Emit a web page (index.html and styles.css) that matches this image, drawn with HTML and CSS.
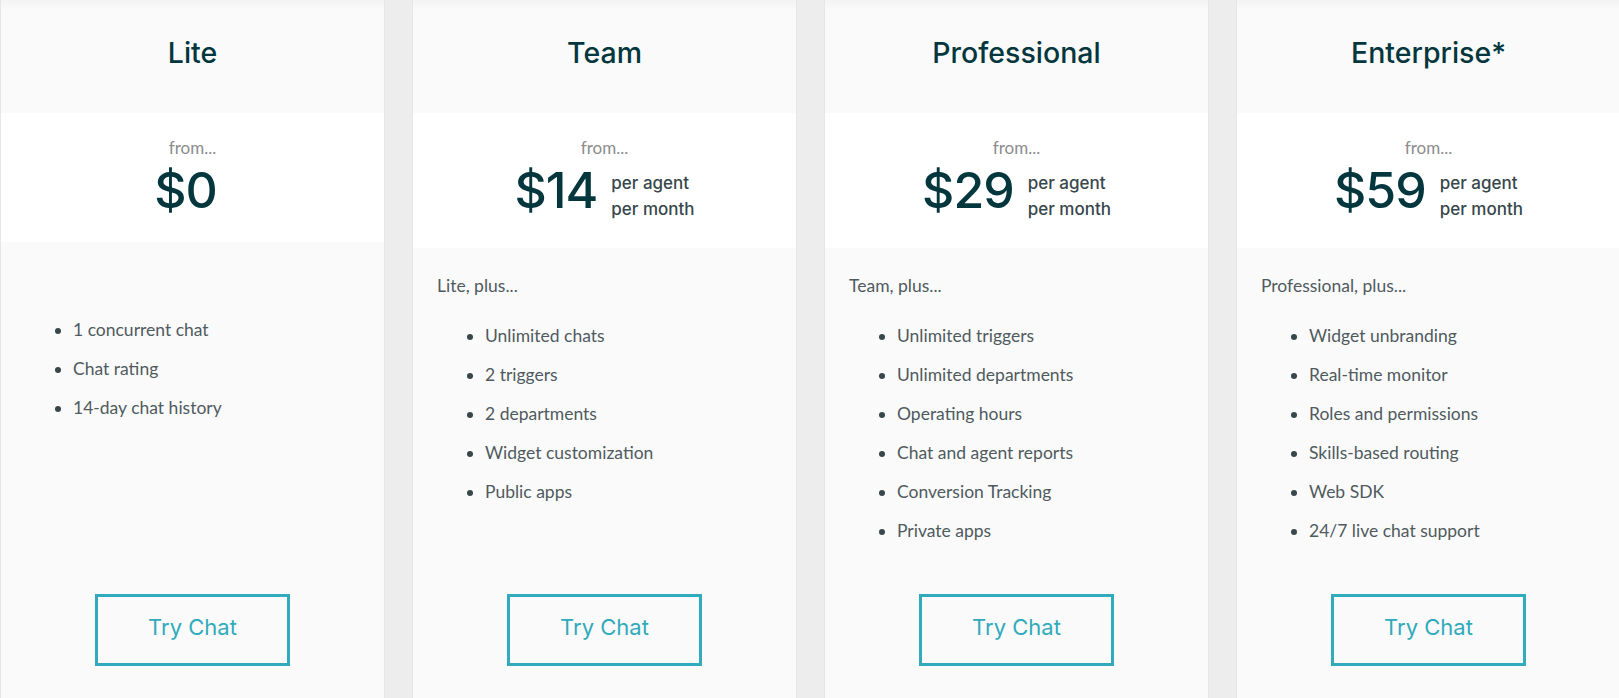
FILE: index.html
```html
<!DOCTYPE html>
<html>

<head>
    <link rel="stylesheet" href="styles.css">
    <title>Chat Pricing</title>
</head>

<body>
    <div class="plans">
        <div class="plan">
            <div class="plan-head">
                <h2>Lite</h2>
            </div>
            <div class="plan-price">
                <p class="from">from...</p>
                <div class="amount">
                    <span class="num">$0</span>
                    <span class="per"></span>
                </div>
            </div>
            <div class="plan-body">
                <p class="plus">&nbsp;</p>
                <ul>
                    <li>1 concurrent chat</li>
                    <li>Chat rating</li>
                    <li>14-day chat history</li>
                </ul>
            </div>
            <div class="plan-foot">
                <a class="try" href="#">Try Chat</a>
            </div>
        </div>

        <div class="plan">
            <div class="plan-head">
                <h2>Team</h2>
            </div>
            <div class="plan-price">
                <p class="from">from...</p>
                <div class="amount">
                    <span class="num">$14</span>
                    <span class="per">per agent<br>per month</span>
                </div>
            </div>
            <div class="plan-body">
                <p class="plus">Lite, plus...</p>
                <ul>
                    <li>Unlimited chats</li>
                    <li>2 triggers</li>
                    <li>2 departments</li>
                    <li>Widget customization</li>
                    <li>Public apps</li>
                </ul>
            </div>
            <div class="plan-foot">
                <a class="try" href="#">Try Chat</a>
            </div>
        </div>

        <div class="plan">
            <div class="plan-head">
                <h2>Professional</h2>
            </div>
            <div class="plan-price">
                <p class="from">from...</p>
                <div class="amount">
                    <span class="num">$29</span>
                    <span class="per">per agent<br>per month</span>
                </div>
            </div>
            <div class="plan-body">
                <p class="plus">Team, plus...</p>
                <ul>
                    <li>Unlimited triggers</li>
                    <li>Unlimited departments</li>
                    <li>Operating hours</li>
                    <li>Chat and agent reports</li>
                    <li>Conversion Tracking</li>
                    <li>Private apps</li>
                </ul>
            </div>
            <div class="plan-foot">
                <a class="try" href="#">Try Chat</a>
            </div>
        </div>

        <div class="plan">
            <div class="plan-head">
                <h2>Enterprise*</h2>
            </div>
            <div class="plan-price">
                <p class="from">from...</p>
                <div class="amount">
                    <span class="num">$59</span>
                    <span class="per">per agent<br>per month</span>
                </div>
            </div>
            <div class="plan-body">
                <p class="plus">Professional, plus...</p>
                <ul>
                    <li>Widget unbranding</li>
                    <li>Real-time monitor</li>
                    <li>Roles and permissions</li>
                    <li>Skills-based routing</li>
                    <li>Web SDK</li>
                    <li>24/7 live chat support</li>
                </ul>
            </div>
            <div class="plan-foot">
                <a class="try" href="#">Try Chat</a>
            </div>
        </div>
    </div>
</body>

</html>
```

FILE: styles.css
```css
html {
    font-family: Lato, "Liberation Sans", sans-serif;
    -webkit-font-smoothing: antialiased;
}

body {
    margin: 0;
    background: #ededed;
    overflow: hidden;
}

.plans {
    display: flex;
    gap: 27px;
    width: 1700px;
}

.plan {
    flex: 0 0 385px;
    box-sizing: border-box;
    height: 760px;
    display: flex;
    flex-direction: column;
    background: #fafafa;
    border-left: 1px solid #e6e6e6;
    border-right: 1px solid #e6e6e6;
}

.plan-head {
    height: 113px;
    display: flex;
    align-items: center;
    justify-content: center;
    background: linear-gradient(#f3f3f3, #fafafa 10px);
}

.plan-head h2 {
    margin: 0 0 8px;
    font-family: Inter, "Liberation Sans", sans-serif;
    font-size: 28.5px;
    font-weight: 500;
    color: #03363d;
}

.plan-price {
    background: #fff;
    padding: 25px 0 22px;
    text-align: center;
}

.from {
    margin: 0;
    font-size: 17px;
    line-height: 20px;
    color: #8c8c8c;
}

.amount {
    display: flex;
    justify-content: center;
    align-items: flex-start;
    gap: 14px;
    margin-top: 2px;
}

.num {
    font-family: Inter, "Liberation Sans", sans-serif;
    font-size: 50px;
    font-weight: 500;
    line-height: 60px;
    color: #03363d;
    letter-spacing: -1px;
}

.per {
    margin: 10px 0 4px;
    font-family: Inter, "Liberation Sans", sans-serif;
    font-size: 17px;
    font-weight: 500;
    line-height: 26px;
    color: #37474b;
    text-align: left;
}

.plan-body {
    flex: 1;
    padding: 0 24px;
    color: #4f5a5e;
    font-size: 17.5px;
}

.plus {
    margin: 28px 0 0;
    line-height: 20px;
}

.plan-body ul {
    margin: 30px 0 0;
    padding-left: 48px;
}

.plan-body li {
    line-height: 20px;
    margin-bottom: 19px;
}

.plan-body li::marker {
    color: #37474b;
}

.plan-foot {
    padding-bottom: 94px;
    display: flex;
    justify-content: center;
}

.try {
    box-sizing: border-box;
    width: 195px;
    height: 72px;
    padding-bottom: 6px;
    display: flex;
    align-items: center;
    justify-content: center;
    border: 3px solid #30aabc;
    font-family: Inter, "Liberation Sans", sans-serif;
    font-size: 22px;
    color: #30aabc;
    text-decoration: none;
}
```
